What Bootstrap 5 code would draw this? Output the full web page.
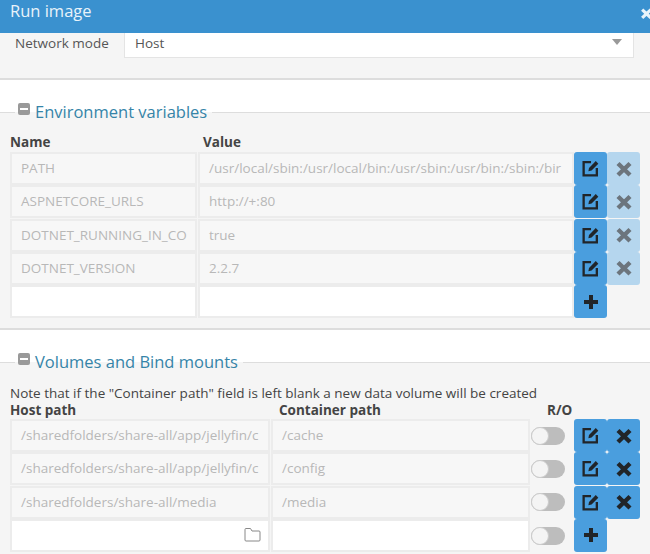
<!DOCTYPE html>
<html lang="en">
<head>
    <meta charset="UTF-8">
    <meta name="viewport" content="width=device-width, initial-scale=1.0">
    <title>Run image</title>
    <link href="https://cdn.jsdelivr.net/npm/bootstrap@5.3.0/dist/css/bootstrap.min.css" rel="stylesheet">
    <style>
        html, body { height: 554px; overflow: hidden; }
        body { font-family: "Open Sans", "Liberation Sans", sans-serif; font-size: 13.5px; color: #444; background: #f5f5f5; }
        .run-head { height: 33px; background: #3a91cf; color: #e8f3fa; font-size: 16.5px; padding-left: 10px; line-height: 22px; }
        .run-close { font-size: 0; margin-right: -3px; margin-top: 7px; }
        .net-wrap { height: 47px; border-bottom: 2px solid #ddd; padding-left: 15px; }
        .net-label { width: 109px; line-height: 20px; color: #555; }
        .net-select { width: 510px; height: 25px; background: #fff; border-left: 1px solid #e4e4e4; border-bottom: 1px solid #e4e4e4; border-right: 1px solid #e4e4e4; padding: 0 10px; line-height: 20px; color: #555; }
        .net-caret { width: 0; height: 0; border-left: 5px solid transparent; border-right: 5px solid transparent; border-top: 6px solid #999; margin-top: 6px; margin-right: 1px; }
        .sect-title { height: 54px; padding-top: 20px; background: linear-gradient(#fff 32px, #ddd 32px, #ddd 33px, #f5f5f5 33px); padding-left: 15px; }
        .sect-title > div { background: linear-gradient(#fff 12px, #f5f5f5 12px); padding: 0 5px 0 3px; height: 34px; display: inline-flex; color: #3584a8; font-size: 16.5px; line-height: 24px; }
        .sect-sign { width: 12px; height: 12px; background: #999; border-radius: 2px; margin: 3px 5px 0 0; position: relative; }
        .sect-sign::after { content: ""; position: absolute; left: 2px; right: 2px; top: 5px; height: 2px; background: #fff; }
        .head-row { padding-left: 10px; font-weight: 700; line-height: 16px; height: 18px; color: #444; }
        .head-vol { height: 17px; }
        .data-row { padding-left: 10px; height: 33.3px; }
        .fld { height: 33px; border: 2px solid #ececec; background: #f7f7f7; color: #b8b8b8; padding: 0 9px; line-height: 29px; white-space: nowrap; overflow: hidden; margin-right: 1px; flex: none; }
        .fld-new { background: #fff; color: #555; position: relative; }
        .w-name { width: 187px; }
        .w-value { width: 376px; margin-right: 0; }
        .w-host { width: 260px; }
        .w-cont { width: 259px; margin-right: 0; }
        .h-name { width: 193px; }
        .h-host { width: 269px; }
        .h-cont { width: 268px; }
        .act { width: 33px; height: 33px; background: #4a9ede; border: 0; padding: 0; border-radius: 3px; display: flex; align-items: center; justify-content: center; flex: none; }
        .act-off { background: #b5d6ee; }
        .tog-wrap { width: 44px; padding-left: 1px; flex: none; display: flex; align-items: center; }
        .tog { width: 34px; height: 18px; border-radius: 9px; background: #bdbdbd; position: relative; }
        .tog::after { content: ""; position: absolute; left: 0; top: 0; width: 18px; height: 18px; border-radius: 50%; background: #f4f4f4; border: 1px solid #ccc; }
        .env-body { height: 196px; border-bottom: 2px solid #ddd; }
        .note-line { padding-left: 10px; margin-top: 1px; line-height: 17px; height: 17px; color: #444; }
        .folder-ico { position: absolute; right: 7px; top: 6px; }
    </style>
</head>
<body>
    <svg class="d-none">
        <symbol id="ico-edit" viewBox="0 0 18 18"><path d="M9.5 3H2.5v12.5H15V8.5" fill="none" stroke="currentColor" stroke-width="2.2"/><path d="M7 11.5l.6-3L14 2l2.4 2.4L10 11z" fill="currentColor"/></symbol>
        <symbol id="ico-x" viewBox="0 0 18 18"><path d="M3 3.5L15 15M15 3.5L3 15" fill="none" stroke="currentColor" stroke-width="4.4"/></symbol>
        <symbol id="ico-plus" viewBox="0 0 18 18"><path d="M9 2v14M2 9h14" fill="none" stroke="currentColor" stroke-width="4"/></symbol>
    </svg>

    <div class="run-head d-flex justify-content-between">
        <span>Run image</span>
        <svg class="run-close" width="13" height="13" style="color:#e8f3fa"><use href="#ico-x"/></svg>
    </div>

    <div class="net-wrap d-flex">
        <div class="net-label">Network mode</div>
        <div class="net-select d-flex justify-content-between"><span>Host</span><span class="net-caret"></span></div>
    </div>

    <div class="sect-title"><div><span class="sect-sign"></span>Environment variables</div></div>
    <div class="env-body">
        <div class="head-row d-flex"><div class="h-name">Name</div><div>Value</div></div>
        <div class="data-row d-flex">
            <div class="fld w-name">PATH</div><div class="fld w-value">/usr/local/sbin:/usr/local/bin:/usr/sbin:/usr/bin:/sbin:/bir</div>
            <button class="act text-dark"><svg width="19" height="19"><use href="#ico-edit"/></svg></button>
            <button class="act act-off text-secondary"><svg width="18" height="18"><use href="#ico-x"/></svg></button>
        </div>
        <div class="data-row d-flex">
            <div class="fld w-name">ASPNETCORE_URLS</div><div class="fld w-value">http://+:80</div>
            <button class="act text-dark"><svg width="19" height="19"><use href="#ico-edit"/></svg></button>
            <button class="act act-off text-secondary"><svg width="18" height="18"><use href="#ico-x"/></svg></button>
        </div>
        <div class="data-row d-flex">
            <div class="fld w-name">DOTNET_RUNNING_IN_CO</div><div class="fld w-value">true</div>
            <button class="act text-dark"><svg width="19" height="19"><use href="#ico-edit"/></svg></button>
            <button class="act act-off text-secondary"><svg width="18" height="18"><use href="#ico-x"/></svg></button>
        </div>
        <div class="data-row d-flex">
            <div class="fld w-name">DOTNET_VERSION</div><div class="fld w-value">2.2.7</div>
            <button class="act text-dark"><svg width="19" height="19"><use href="#ico-edit"/></svg></button>
            <button class="act act-off text-secondary"><svg width="18" height="18"><use href="#ico-x"/></svg></button>
        </div>
        <div class="data-row d-flex">
            <div class="fld fld-new w-name"></div><div class="fld fld-new w-value"></div>
            <button class="act text-dark"><svg width="18" height="18"><use href="#ico-plus"/></svg></button>
        </div>
    </div>

    <div class="sect-title"><div><span class="sect-sign"></span>Volumes and Bind mounts</div></div>
    <div class="note-line">Note that if the "Container path" field is left blank a new data volume will be created</div>
    <div class="head-row head-vol d-flex"><div class="h-host">Host path</div><div class="h-cont">Container path</div><div>R/O</div></div>
    <div class="data-row d-flex">
        <div class="fld w-host">/sharedfolders/share-all/app/jellyfin/c</div><div class="fld w-cont">/cache</div>
        <div class="tog-wrap"><span class="tog"></span></div>
        <button class="act text-dark"><svg width="19" height="19"><use href="#ico-edit"/></svg></button>
        <button class="act text-dark"><svg width="18" height="18"><use href="#ico-x"/></svg></button>
    </div>
    <div class="data-row d-flex">
        <div class="fld w-host">/sharedfolders/share-all/app/jellyfin/c</div><div class="fld w-cont">/config</div>
        <div class="tog-wrap"><span class="tog"></span></div>
        <button class="act text-dark"><svg width="19" height="19"><use href="#ico-edit"/></svg></button>
        <button class="act text-dark"><svg width="18" height="18"><use href="#ico-x"/></svg></button>
    </div>
    <div class="data-row d-flex">
        <div class="fld w-host">/sharedfolders/share-all/media</div><div class="fld w-cont">/media</div>
        <div class="tog-wrap"><span class="tog"></span></div>
        <button class="act text-dark"><svg width="19" height="19"><use href="#ico-edit"/></svg></button>
        <button class="act text-dark"><svg width="18" height="18"><use href="#ico-x"/></svg></button>
    </div>
    <div class="data-row d-flex">
        <div class="fld fld-new w-host">
            <svg class="folder-ico" width="17" height="15" viewBox="0 0 17 15"><path d="M1 3V13a1 1 0 0 0 1 1h13a1 1 0 0 0 1-1V5a1 1 0 0 0-1-1H8L6.500 1.500H2A1 1 0 0 0 1 2.500z" fill="none" stroke="#888" stroke-width="1"/></svg>
        </div><div class="fld fld-new w-cont"></div>
        <div class="tog-wrap"><span class="tog"></span></div>
        <button class="act text-dark"><svg width="18" height="18"><use href="#ico-plus"/></svg></button>
    </div>

    <script src="https://cdn.jsdelivr.net/npm/bootstrap@5.3.0/dist/js/bootstrap.bundle.min.js"></script>
</body>
</html>
